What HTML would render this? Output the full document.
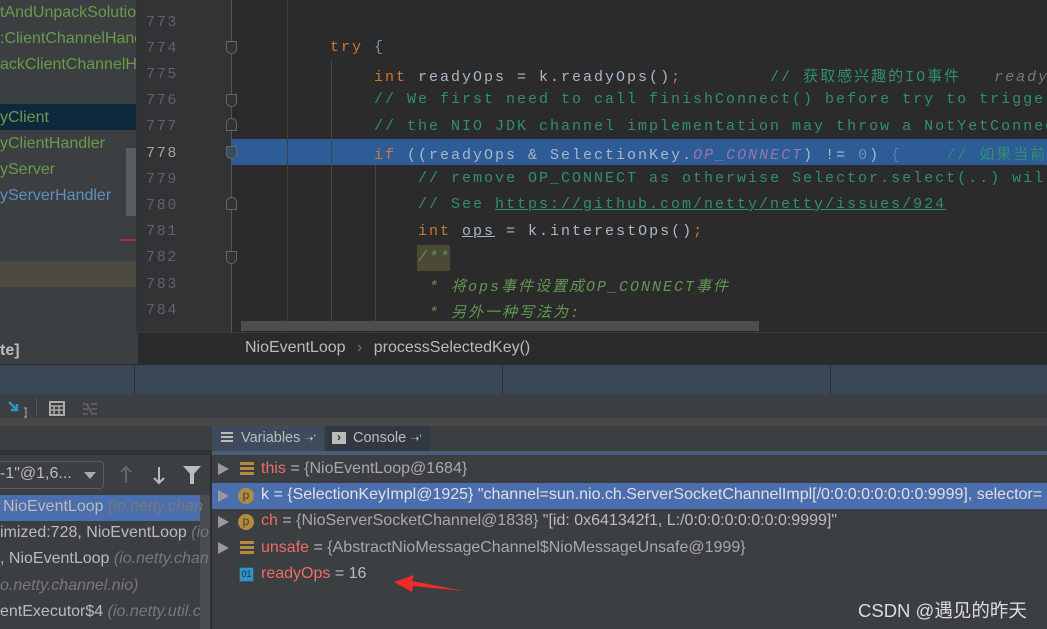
<!DOCTYPE html>
<html><head><meta charset="utf-8">
<style>
*{margin:0;padding:0;box-sizing:border-box}
body{width:1047px;height:629px;overflow:hidden;background:#2b2b2b;position:relative;font-family:"Liberation Sans","Noto Sans CJK SC",sans-serif}
.a{position:absolute;white-space:nowrap}
.mono{font-family:"Liberation Mono","Noto Sans CJK SC",monospace;font-size:15px;letter-spacing:2px;white-space:pre}
.ln{color:#606366;font-family:"Liberation Mono",monospace;font-size:15px;letter-spacing:1.7px;left:146px}
.kw{color:#cc7832}.tx{color:#a9b7c6}.cm{color:#2f9070}.jd{color:#629755;font-style:italic}
.pt{font-size:16px;color:#6a9a4a}
.fr{font-size:16px;color:#bbbbbb}
.fr i{color:#787878}
.vr{font-size:16px;color:#a9a9a9}
.vr b{font-weight:normal;color:#ef6b6b}
.vr em{font-style:normal;color:#bbbbbb}
.tri{width:0;height:0;border-top:6px solid transparent;border-bottom:6px solid transparent;border-left:11px solid #9a9a9a}
.pic{width:16px;height:16px;border-radius:50%;background:#b58a3c;color:#3c3f41;font-size:12px;text-align:center;line-height:15px}
</style></head><body>
<!-- project panel -->
<div class="a" style="left:0;top:0;width:138px;height:332px;background:#3c3f41"></div>
<div class="a" style="left:0;top:104px;width:138px;height:26px;background:#0d293e"></div>
<div class="a" style="left:0;top:261px;width:138px;height:26px;background:#4d4a3f"></div>
<div class="a" style="left:126px;top:148px;width:10px;height:68px;background:#5a5d5f"></div>
<div class="a" style="left:121px;top:239px;width:17px;height:2px;background:#a83030"></div>
<div class="a pt" style="left:0;top:4px">tAndUnpackSolution</div>
<div class="a pt" style="left:0;top:30px">:ClientChannelHand</div>
<div class="a pt" style="left:0;top:56px">ackClientChannelHa</div>
<div class="a pt" style="left:0;top:109px">yClient</div>
<div class="a pt" style="left:0;top:135px">yClientHandler</div>
<div class="a pt" style="left:0;top:161px">yServer</div>
<div class="a pt" style="left:0;top:187px;color:#5d8fc1">yServerHandler</div>
<div class="a" style="left:136px;top:0;width:2px;height:332px;background:#323232"></div>
<!-- gutter -->
<div class="a" style="left:138px;top:0;width:93px;height:332px;background:#313335"></div>
<div class="a" style="left:231px;top:0;width:1px;height:332px;background:#555"></div>
<div class="a" style="left:231px;top:139px;width:816px;height:26px;background:#2d5c97"></div>
<div class="a" style="left:287px;top:0;width:1px;height:332px;background:#3a453a"></div>
<div class="a" style="left:331px;top:60px;width:1px;height:272px;background:#444"></div>
<div class="a" style="left:375px;top:165px;width:1px;height:167px;background:#444"></div>
<div class="a ln" style="top:14px">773</div>
<div class="a ln" style="top:40px">774</div>
<div class="a ln" style="top:66px">775</div>
<div class="a ln" style="top:92px">776</div>
<div class="a ln" style="top:118px">777</div>
<div class="a ln" style="top:145px;color:#a4a3a3">778</div>
<div class="a ln" style="top:171px">779</div>
<div class="a ln" style="top:197px">780</div>
<div class="a ln" style="top:223px">781</div>
<div class="a ln" style="top:249px">782</div>
<div class="a ln" style="top:276px">783</div>
<div class="a ln" style="top:302px">784</div>
<!-- fold markers -->
<div class="a" style="left:226px;top:41px;width:11px;height:13px;border:1px solid #666;border-radius:0 0 5px 5px;background:#313335"></div>
<div class="a" style="left:226px;top:94px;width:11px;height:13px;border:1px solid #666;border-radius:0 0 5px 5px;background:#313335"></div>
<div class="a" style="left:226px;top:118px;width:11px;height:13px;border:1px solid #666;border-radius:5px 5px 0 0;background:#313335"></div>
<div class="a" style="left:226px;top:146px;width:11px;height:13px;border:1px solid #666;border-radius:0 0 5px 5px;background:#3a4b60"></div>
<div class="a" style="left:226px;top:197px;width:11px;height:13px;border:1px solid #666;border-radius:5px 5px 0 0;background:#313335"></div>
<div class="a" style="left:226px;top:251px;width:11px;height:13px;border:1px solid #666;border-radius:0 0 5px 5px;background:#313335"></div>
<!-- code -->
<div class="a mono kw" style="left:330px;top:39px">try <span style="color:#6897bb">{</span></div>
<div class="a mono" style="left:374px;top:65px"><span class="kw">int</span> <span class="tx">readyOps = k.readyOps()</span><span class="kw">;</span><span class="cm">        // 获取感兴趣的IO事件</span>   <span style="color:#787878;font-style:italic">ready</span></div>
<div class="a mono cm" style="left:374px;top:91px">// We first need to call finishConnect() before try to trigger</div>
<div class="a mono cm" style="left:374px;top:118px">// the NIO JDK channel implementation may throw a NotYetConnec</div>
<div class="a mono" style="left:374px;top:143px"><span class="kw">if</span> <span class="tx">((readyOps &amp; SelectionKey.</span><span style="color:#9876aa;font-style:italic">OP_CONNECT</span><span class="tx">) != </span><span style="color:#6897bb">0</span><span class="tx">)</span> <span style="color:#5a7ab0">{</span>    <span class="cm">// 如果当前</span></div>
<div class="a mono cm" style="left:418px;top:170px">// remove OP_CONNECT as otherwise Selector.select(..) will</div>
<div class="a mono cm" style="left:418px;top:196px">// See <span style="text-decoration:underline">https://github.com/netty/netty/issues/924</span></div>
<div class="a mono" style="left:418px;top:223px"><span class="kw">int</span> <span class="tx" style="text-decoration:underline">ops</span><span class="tx"> = k.interestOps()</span><span class="kw">;</span></div>
<div class="a" style="left:417px;top:245px;width:33px;height:26px;background:#4a4a36"></div>
<div class="a mono jd" style="left:418px;top:249px">/**</div>
<div class="a mono jd" style="left:418px;top:275px"> * 将ops事件设置成OP_CONNECT事件</div>
<div class="a mono jd" style="left:418px;top:301px"> * 另外一种写法为:</div>
<div class="a" style="left:241px;top:321px;width:518px;height:10px;background:#4d4d4d"></div>
<!-- breadcrumb -->
<div class="a" style="left:0;top:332px;width:138px;height:33px;background:#3c3f41"></div>
<div class="a" style="left:0;top:342px;font-size:16px;font-weight:bold;color:#bbb">te]</div>
<div class="a" style="left:138px;top:332px;width:909px;height:33px;background:#2b2b2b;border-top:1px solid #3a3a3a"></div>
<div class="a" style="left:245px;top:339px;font-size:16px;color:#bbb">NioEventLoop <span style="color:#777;margin:0 7px">›</span> processSelectedKey()</div>
<!-- blue bar -->
<div class="a" style="left:0;top:364px;width:1047px;height:31px;background:#394656;border-top:1px solid #2b2b2b"></div>
<div class="a" style="left:134px;top:364px;width:1px;height:31px;background:#2b2f35"></div>
<div class="a" style="left:502px;top:364px;width:1px;height:31px;background:#2b2f35"></div>
<div class="a" style="left:830px;top:364px;width:1px;height:31px;background:#2b2f35"></div>
<!-- toolbar -->
<div class="a" style="left:0;top:395px;width:1047px;height:23px;background:#3c3f41"></div>
<svg class="a" style="left:7px;top:400px" width="20" height="18"><path d="M2 2 L10 10 M10 4 L10 10 L4 10" stroke="#3592c4" stroke-width="2.5" fill="none"/><path d="M19 8 V17 M17 8 H21 M17 17 H21" stroke="#aaa" stroke-width="1"/></svg>
<div class="a" style="left:36px;top:398px;width:1px;height:18px;background:#555"></div>
<svg class="a" style="left:49px;top:401px" width="16" height="15"><rect x="1" y="1" width="14" height="13" fill="none" stroke="#aaa" stroke-width="2"/><path d="M1 5 H15 M1 9 H15 M5 5 V14 M10 5 V14" stroke="#aaa" stroke-width="1.5"/></svg>
<svg class="a" style="left:82px;top:402px" width="16" height="14"><path d="M1 2 H6 M9 2 H15 M1 7 H6 M9 7 H15 M1 12 H6 M9 12 H15 M5 2 L10 12" stroke="#666" stroke-width="1.5"/></svg>
<div class="a" style="left:0;top:418px;width:1047px;height:8px;background:#474747"></div>
<!-- tab bar -->
<div class="a" style="left:0;top:426px;width:1047px;height:25px;background:#3c3f41"></div>
<div class="a" style="left:0;top:450px;width:212px;height:5px;background:#323232"></div>
<div class="a" style="left:212px;top:426px;width:112px;height:25px;background:#3d4b5c"></div>
<div class="a" style="left:212px;top:451px;width:835px;height:4px;background:#4a5e78"></div>
<div class="a" style="left:221px;top:432px;width:12px;height:12px;background:repeating-linear-gradient(180deg,#bbb 0 2px,transparent 2px 4px)"></div>
<div class="a" style="left:241px;top:430px;font-size:14.5px;color:#bbb">Variables <span style="font-size:11px">➝'</span></div>
<div class="a" style="left:326px;top:426px;width:104px;height:25px;background:#323842"></div>
<div class="a" style="left:332px;top:432px;width:14px;height:12px;background:#bbb;color:#333;font-size:12px;line-height:11px;text-align:center;font-weight:bold">›</div>
<div class="a" style="left:353px;top:430px;font-size:14.5px;color:#bbb">Console <span style="font-size:11px">➝'</span></div>
<!-- frames panel -->
<div class="a" style="left:0;top:455px;width:212px;height:174px;background:#3c3f41"></div>
<div class="a" style="left:0;top:461px;width:104px;height:28px;border:1px solid #5a5d60;border-left:none;border-radius:0 4px 4px 0"></div>
<div class="a" style="left:0;top:465px;font-size:16px;color:#bbb">-1"@1,6...</div>
<div class="a" style="left:84px;top:472px;border-left:6px solid transparent;border-right:6px solid transparent;border-top:7px solid #aaa"></div>
<svg class="a" style="left:119px;top:465px" width="14" height="20"><path d="M7 2 V18 M2 7 L7 2 L12 7" stroke="#666" stroke-width="2" fill="none"/></svg>
<svg class="a" style="left:152px;top:465px" width="14" height="20"><path d="M7 2 V18 M2 13 L7 18 L12 13" stroke="#bbb" stroke-width="2" fill="none"/></svg>
<div class="a" style="left:183px;top:466px;border-left:9px solid transparent;border-right:9px solid transparent;border-top:10px solid #bbb"></div>
<div class="a" style="left:190px;top:474px;width:4px;height:10px;background:#bbb"></div>
<div class="a" style="left:0;top:495px;width:212px;height:26px;background:#4b6eaf"></div>
<div class="a" style="left:200px;top:495px;width:10px;height:134px;background:#4a4d4f"></div>
<div class="a fr" style="left:3px;top:498px">NioEventLoop <i>(io.netty.chan</i></div>
<div class="a fr" style="left:0;top:524px">imized:728, NioEventLoop <i>(io</i></div>
<div class="a fr" style="left:0;top:550px">, NioEventLoop <i>(io.netty.chan</i></div>
<div class="a fr" style="left:0;top:577px"><i>o.netty.channel.nio)</i></div>
<div class="a fr" style="left:0;top:603px">entExecutor$4 <i>(io.netty.util.c</i></div>
<div class="a" style="left:210px;top:455px;width:2px;height:174px;background:#2e2e2e"></div>
<!-- variables -->
<div class="a" style="left:212px;top:455px;width:835px;height:174px;background:#3c3f41"></div>
<div class="a" style="left:212px;top:483px;width:835px;height:26px;background:#4b6eaf"></div>
<div class="a tri" style="left:218px;top:463px"></div>
<div class="a tri" style="left:218px;top:490px"></div>
<div class="a tri" style="left:218px;top:516px"></div>
<div class="a tri" style="left:218px;top:542px"></div>
<div class="a" style="left:240px;top:462px;width:14px;height:14px;background:repeating-linear-gradient(180deg,#b58a3c 0 3px,transparent 3px 5px)"></div>
<div class="a pic" style="left:238px;top:488px">p</div>
<div class="a pic" style="left:238px;top:514px">p</div>
<div class="a" style="left:240px;top:541px;width:14px;height:14px;background:repeating-linear-gradient(180deg,#b58a3c 0 3px,transparent 3px 5px)"></div>
<div class="a" style="left:239px;top:567px;width:15px;height:15px;background:#3592c4;border:1px solid #1f5e80;color:#0d2f44;font-size:9px;line-height:13px;text-align:center">01</div>
<div class="a vr" style="left:261px;top:460px"><b>this</b> <em>=</em> {NioEventLoop@1684}</div>
<div class="a vr" style="left:261px;top:486px;color:#e0e0e0"><b style="color:#e8e8e8">k</b> = {SelectionKeyImpl@1925} "channel=sun.nio.ch.ServerSocketChannelImpl[/0:0:0:0:0:0:0:0:9999], selector=</div>
<div class="a vr" style="left:261px;top:512px"><b>ch</b> <em>=</em> {NioServerSocketChannel@1838} <em>"[id: 0x641342f1, L:/0:0:0:0:0:0:0:0:9999]"</em></div>
<div class="a vr" style="left:261px;top:539px"><b>unsafe</b> <em>=</em> {AbstractNioMessageChannel$NioMessageUnsafe@1999}</div>
<div class="a vr" style="left:261px;top:565px"><b>readyOps</b> <em>= 16</em></div>
<svg class="a" style="left:392px;top:570px" width="75" height="25"><path d="M72 21 L20 11 L22 5 L2 12 L20 22 L21 16 Z" fill="#ee2a2a"/></svg>
<div class="a" style="left:858px;top:597px;font-size:18.5px;color:#dcdcdc">CSDN @遇见的昨天</div>
</body></html>
